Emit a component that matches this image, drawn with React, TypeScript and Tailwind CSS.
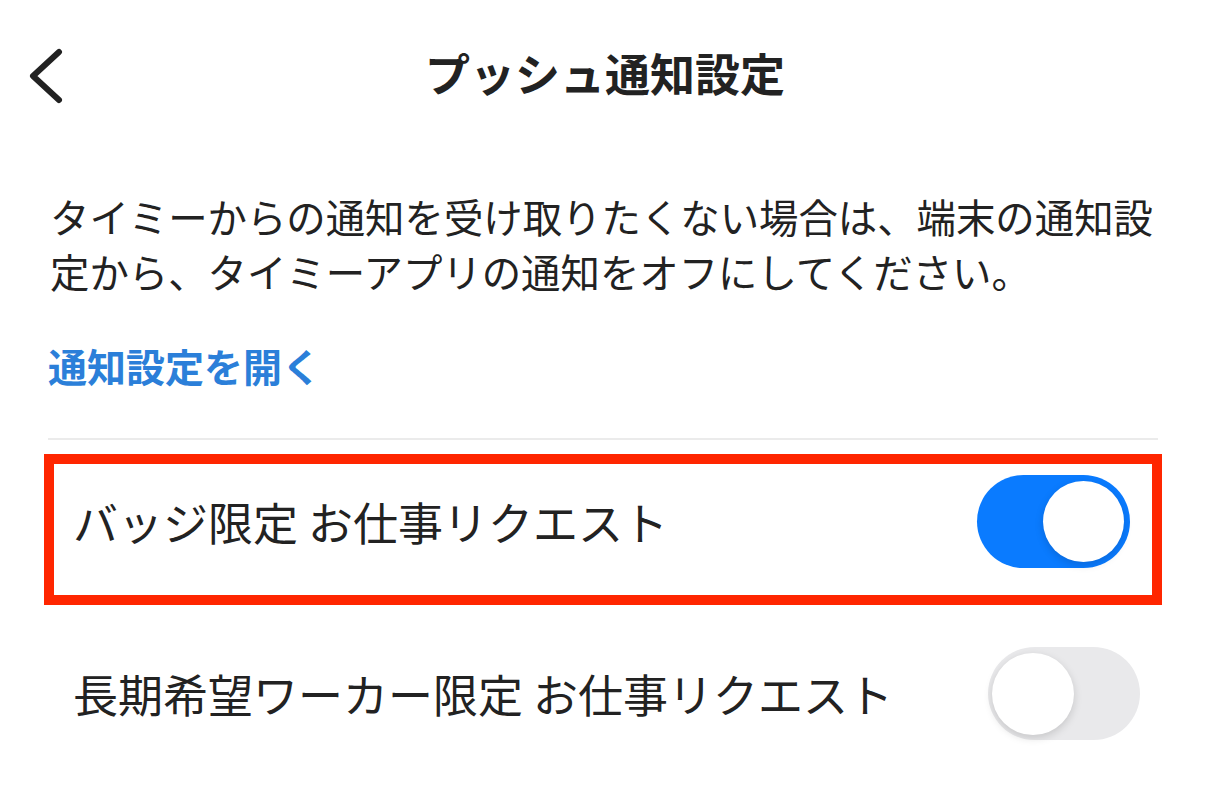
import React from "react";

const font = {
  fontFamily: '"Noto Sans CJK JP", "Noto Sans", sans-serif',
};

const Toggle = ({ on }: { on: boolean }) => {
  if (on) {
    return (
      <div className="w-[153px] h-[93px] rounded-full bg-[#0a7bff] flex items-center justify-end pr-[6px] shrink-0">
        <div className="w-[81px] h-[81px] rounded-full bg-white shadow-[0_3px_8px_rgba(0,0,0,0.15)]" />
      </div>
    );
  }
  return (
    <div className="w-[152px] h-[93px] rounded-full bg-[#e9e9eb] flex items-center justify-start pl-[4px] shrink-0">
      <div className="w-[82px] h-[82px] rounded-full bg-white shadow-[0_3px_8px_rgba(0,0,0,0.15)]" />
    </div>
  );
};

const App = () => {
  return (
    <main className="w-[1206px] h-[804px] bg-white text-[#222] overflow-hidden" style={font}>
      <header className="relative h-[154px] flex items-center justify-center pb-[8px]">
        <div className="absolute left-[26px] top-[48px]">
          <svg width="40" height="56" viewBox="0 0 40 56" fill="none">
            <polyline
              points="33,4 7,28 33,52"
              stroke="#222"
              strokeWidth="6"
              strokeLinecap="round"
              strokeLinejoin="round"
            />
          </svg>
        </div>
        <h1 className="text-[45px] font-bold ml-[4px]">プッシュ通知設定</h1>
      </header>

      <div className="px-[48px]">
        <p className="mt-[34px] text-[39.4px] leading-[55px] pl-[2px]">
          タイミーからの通知を受け取りたくない場合は、端末の通知設定から、タイミーアプリの通知をオフにしてください。
        </p>
        <div className="mt-[40px] text-[39px] leading-[55px] font-bold text-[#2b7fd9]">
          通知設定を開く
        </div>
        <div className="mt-[45px] h-[2px] bg-[#ebebeb]" />

        <div className="mt-[14px] mx-[-4px] h-[151px] border-[10px] border-[#ff2600] flex items-center justify-between pl-[19px] pr-[22px] pb-[16px]">
          <span className="text-[45px] leading-none">バッジ限定 お仕事リクエスト</span>
          <Toggle on={true} />
        </div>

        <div className="mt-[42px] h-[93px] flex items-center justify-between pl-[25px] pr-[18px]">
          <span className="text-[45px] leading-none">長期希望ワーカー限定 お仕事リクエスト</span>
          <Toggle on={false} />
        </div>
      </div>
    </main>
  );
};

export default App;
